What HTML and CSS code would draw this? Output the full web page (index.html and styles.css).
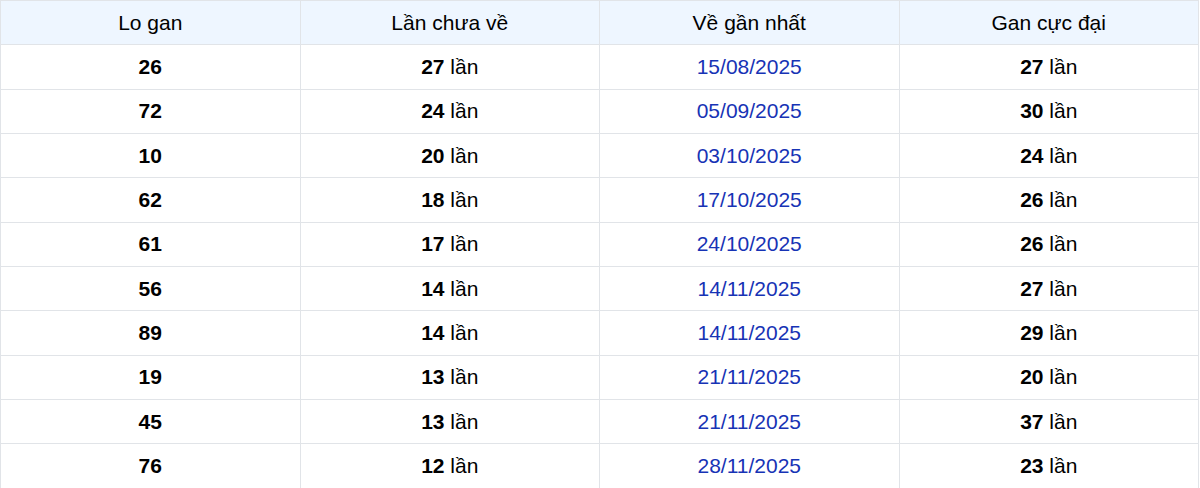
FILE: index.html
```html
<!DOCTYPE html>
<html lang="vi">
<head>
<meta charset="utf-8">
<link rel="stylesheet" href="styles.css">
</head>
<body>
<table class="gan-table">
  <thead>
    <tr><th>Lo gan</th><th>Lần chưa về</th><th>Về gần nhất</th><th>Gan cực đại</th></tr>
  </thead>
  <tbody>
    <tr><td><b>26</b></td><td><b>27</b> lần</td><td class="date">15/08/2025</td><td><b>27</b> lần</td></tr>
    <tr><td><b>72</b></td><td><b>24</b> lần</td><td class="date">05/09/2025</td><td><b>30</b> lần</td></tr>
    <tr><td><b>10</b></td><td><b>20</b> lần</td><td class="date">03/10/2025</td><td><b>24</b> lần</td></tr>
    <tr><td><b>62</b></td><td><b>18</b> lần</td><td class="date">17/10/2025</td><td><b>26</b> lần</td></tr>
    <tr><td><b>61</b></td><td><b>17</b> lần</td><td class="date">24/10/2025</td><td><b>26</b> lần</td></tr>
    <tr><td><b>56</b></td><td><b>14</b> lần</td><td class="date">14/11/2025</td><td><b>27</b> lần</td></tr>
    <tr><td><b>89</b></td><td><b>14</b> lần</td><td class="date">14/11/2025</td><td><b>29</b> lần</td></tr>
    <tr><td><b>19</b></td><td><b>13</b> lần</td><td class="date">21/11/2025</td><td><b>20</b> lần</td></tr>
    <tr><td><b>45</b></td><td><b>13</b> lần</td><td class="date">21/11/2025</td><td><b>37</b> lần</td></tr>
    <tr><td><b>76</b></td><td><b>12</b> lần</td><td class="date">28/11/2025</td><td><b>23</b> lần</td></tr>
  </tbody>
</table>
</body>
</html>
```
FILE: styles.css
```css
html, body {
  margin: 0;
  padding: 0;
  background: #ffffff;
}
body {
  font-family: "Liberation Sans", Arial, sans-serif;
  font-size: 21px;
  color: #000000;
}
.gan-table {
  width: 1199px;
  border-collapse: collapse;
  table-layout: fixed;
}
.gan-table th,
.gan-table td {
  border: 1px solid #e1e4e8;
  padding: 9.68px 8px;
  text-align: center;
  line-height: 24px;
}
.gan-table th {
  background: #eef6ff;
  font-weight: 400;
}
.gan-table b {
  font-weight: 700;
}
.gan-table .date {
  color: #1733b5;
}
```
